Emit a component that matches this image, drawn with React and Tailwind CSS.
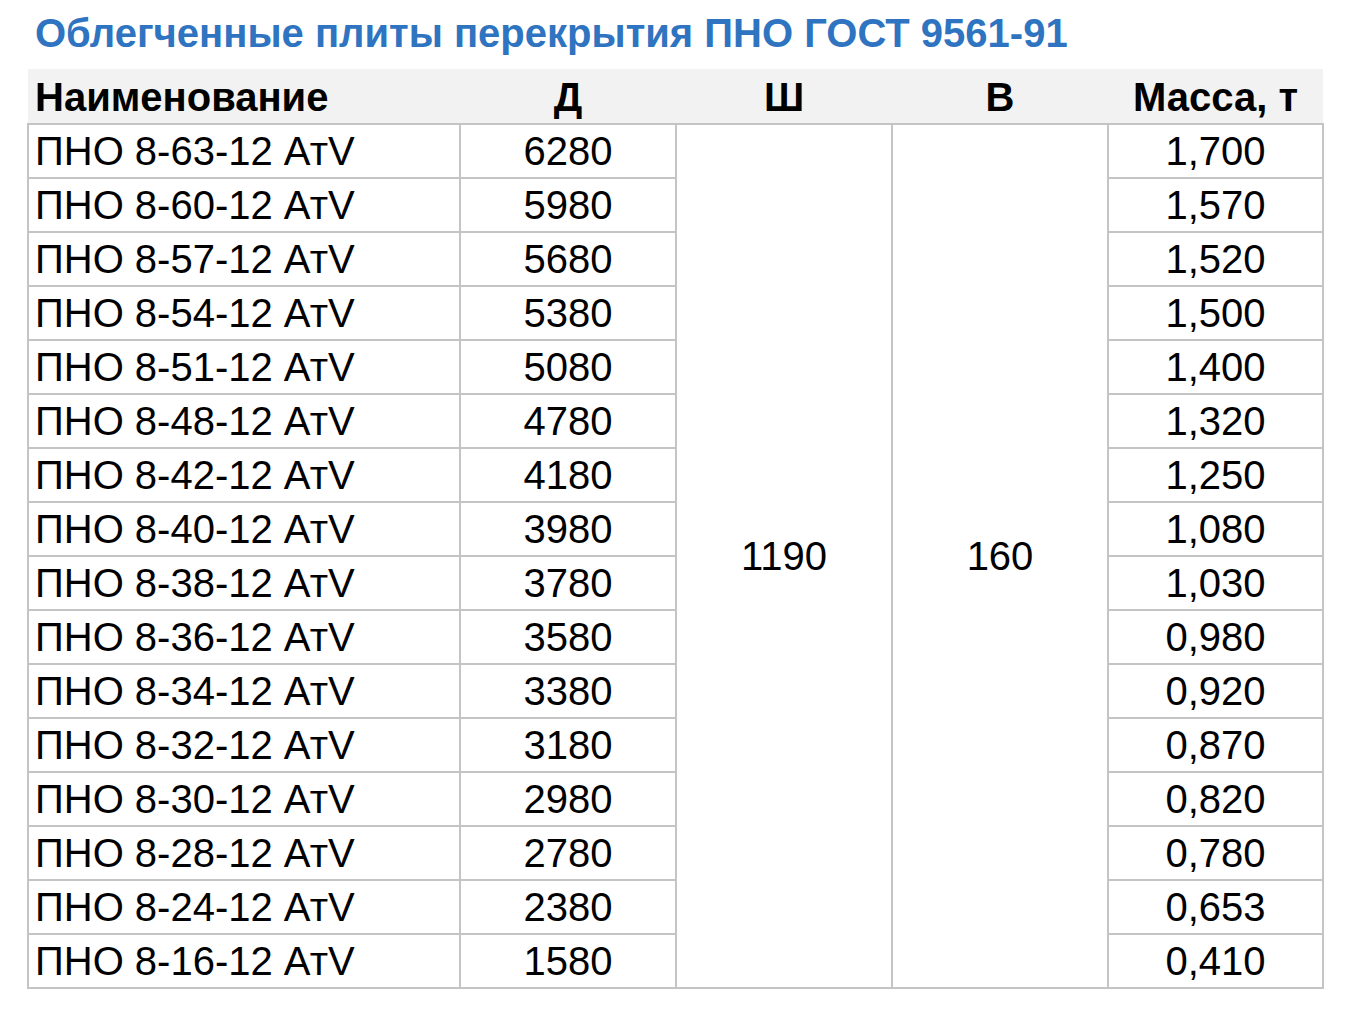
const rows = [
  ["ПНО 8-63-12 АтV", "6280", "1,700"],
  ["ПНО 8-60-12 АтV", "5980", "1,570"],
  ["ПНО 8-57-12 АтV", "5680", "1,520"],
  ["ПНО 8-54-12 АтV", "5380", "1,500"],
  ["ПНО 8-51-12 АтV", "5080", "1,400"],
  ["ПНО 8-48-12 АтV", "4780", "1,320"],
  ["ПНО 8-42-12 АтV", "4180", "1,250"],
  ["ПНО 8-40-12 АтV", "3980", "1,080"],
  ["ПНО 8-38-12 АтV", "3780", "1,030"],
  ["ПНО 8-36-12 АтV", "3580", "0,980"],
  ["ПНО 8-34-12 АтV", "3380", "0,920"],
  ["ПНО 8-32-12 АтV", "3180", "0,870"],
  ["ПНО 8-30-12 АтV", "2980", "0,820"],
  ["ПНО 8-28-12 АтV", "2780", "0,780"],
  ["ПНО 8-24-12 АтV", "2380", "0,653"],
  ["ПНО 8-16-12 АтV", "1580", "0,410"],
];

export default function App() {
  return (
    <div className="min-h-screen bg-white px-[27px] text-black font-['Liberation_Sans',Arial,sans-serif]">
      <h1 className="pl-2 pt-[10px] mb-[13px] text-[40px] leading-[46px] font-bold text-[#2f74c0]">
        Облегченные плиты перекрытия ПНО ГОСТ 9561-91
      </h1>
      <table className="w-[1295px] border-collapse table-fixed text-[40px] leading-[46px]">
        <colgroup>
          <col className="w-[432px]" />
          <col className="w-[216px]" />
          <col className="w-[216px]" />
          <col className="w-[216px]" />
          <col className="w-[215px]" />
        </colgroup>
        <thead>
          <tr className="h-[55px] bg-[#f2f2f2] font-bold">
            <th className="pl-[7px] pt-[2px] text-left">Наименование</th>
            <th className="pt-[2px] text-center">Д</th>
            <th className="pt-[2px] text-center">Ш</th>
            <th className="pt-[2px] text-center">В</th>
            <th className="pt-[2px] text-center">Масса, т</th>
          </tr>
        </thead>
        <tbody>
          {rows.map((r, i) => (
            <tr key={r[0]} className="h-[54px]">
              <td className="border-2 border-[#c4c4c4] pl-[6px] py-0 text-left">{r[0]}</td>
              <td className="border-2 border-[#c4c4c4] py-0 text-center">{r[1]}</td>
              {i === 0 && (
                <>
                  <td rowSpan={16} className="border-2 border-[#c4c4c4] text-center align-middle">1190</td>
                  <td rowSpan={16} className="border-2 border-[#c4c4c4] text-center align-middle">160</td>
                </>
              )}
              <td className="border-2 border-[#c4c4c4] py-0 text-center">{r[2]}</td>
            </tr>
          ))}
        </tbody>
      </table>
    </div>
  );
}
